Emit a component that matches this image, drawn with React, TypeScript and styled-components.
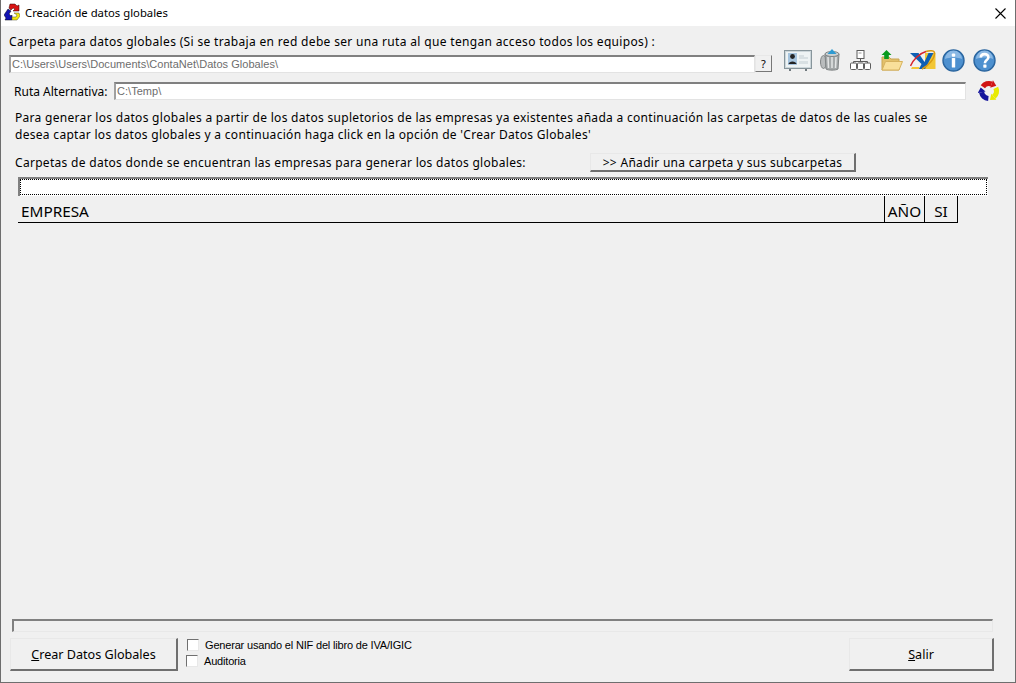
import styled, { createGlobalStyle } from 'styled-components';

const GlobalStyle = createGlobalStyle`
  html, body {
    margin: 0;
    padding: 0;
    background: #f0f0f0;
  }
`;

const CardIcon = () => (
  <svg width="28" height="21" viewBox="0 0 28 21">
    <rect x="0.5" y="0.5" width="27" height="18" fill="#eef3f4" stroke="#87959b" />
    <rect x="1.5" y="1.5" width="25" height="16" fill="none" stroke="#ccd6da" />
    <rect x="4" y="3" width="9" height="12" fill="#a6c4de" />
    <circle cx="8.5" cy="6.5" r="2.4" fill="#222" />
    <path d="M4.500 14 C5 10.500 12 10.500 12.500 14 Z" fill="#222" />
    <path d="M15 5h5v2h4v2h-9zM15 11h9v3h-9z" fill="#d8e0e3" />
    <path d="M6 19v2M22 19v2" stroke="#70797e" strokeWidth="2" />
  </svg>
);

const BinIcon = () => (
  <svg width="20" height="22" viewBox="0 0 20 22">
    <ellipse cx="3.500" cy="13" rx="3" ry="6.500" fill="#b9bcbd" stroke="#808485" />
    <path d="M5 5h14l-1 15c-2 1.500-10 1.500-12 0z" fill="#a4a8a9" stroke="#808485" />
    <path d="M8 8l.5 11M12 8v11M16 8l-.5 11" stroke="#e4e6e6" strokeWidth="1.500" />
    <ellipse cx="12" cy="5" rx="7" ry="2.500" fill="#cdd1d2" stroke="#808485" />
    <path d="M12 0l4.500 5h-9z" fill="#2f9bd2" />
  </svg>
);

const TreeIcon = () => (
  <svg width="21" height="20" viewBox="0 0 21 20" fill="#fff" stroke="#5c5c5c" strokeWidth="1">
    <rect x="7" y="0.500" width="7" height="8" />
    <path d="M8.500 3h3" stroke="#999" />
    <path d="M10.500 8.500v3M3.500 13v-1.500h14V13" fill="none" />
    <rect x="0.500" y="13" width="6" height="6.500" rx="1" />
    <rect x="7.500" y="13" width="6" height="6.500" rx="1" />
    <rect x="14.500" y="13" width="6" height="6.500" rx="1" />
  </svg>
);

const FolderIcon = () => (
  <svg width="22" height="21" viewBox="0 0 22 21">
    <path d="M1 7h7l2 2h8v11H1z" fill="#e2c06a" stroke="#c9a653" />
    <path d="M1 20l3.500-8.500H21.500L18 20z" fill="#f9e09a" stroke="#d6b25e" />
    <path d="M5.500 0l5 5H7.800v4H3.200V5H.500z" fill="#0a9a1e" />
  </svg>
);

const AeatIcon = () => (
  <svg width="26" height="20" viewBox="0 0 26 20">
    <rect x="15" y="3" width="10.500" height="16" fill="#f2c634" />
    <path d="M2 17h7l1 2H1z" fill="#f2c634" />
    <path d="M0 3h8.500l6 9 4-9h5L15 19H9l2.500-5z" fill="#0e5fb4" />
    <path d="M.500 16C3 10 9 3.500 16 1.500" fill="none" stroke="#d8242c" strokeWidth="1.500" />
    <path d="M12 19C18 16 25 9 24.500 2.500 24 0 19 .500 16 1.500" fill="none" stroke="#d99a12" strokeWidth="1.400" />
  </svg>
);

const InfoIcon = () => (
  <svg width="23" height="23" viewBox="0 0 23 23">
    <circle cx="11.500" cy="11.500" r="10.500" fill="#4d90cf" stroke="#2a659f" strokeWidth="1.400" />
    <path d="M3 10a8.500 8.500 0 0 1 17 0c-5-2-12-2-17 0z" fill="#8ab8e4" />
    <rect x="9.800" y="4.500" width="3.400" height="3.200" rx="1" fill="#fff" />
    <rect x="9.800" y="9" width="3.400" height="9.500" rx=".6" fill="#fff" />
  </svg>
);

const HelpIcon = () => (
  <svg width="23" height="23" viewBox="0 0 23 23">
    <circle cx="11.500" cy="11.500" r="10.500" fill="#4d90cf" stroke="#2a659f" strokeWidth="1.400" />
    <path d="M3 10a8.500 8.500 0 0 1 17 0c-5-2-12-2-17 0z" fill="#8ab8e4" />
    <path d="M7.800 8.500c0-4.500 7.600-4.500 7.600-.3 0 3-3.500 2.800-3.500 6" fill="none" stroke="#fff" strokeWidth="2.600" />
    <rect x="10.300" y="15.500" width="3.200" height="3.200" rx=".6" fill="#fff" />
  </svg>
);

const arrowColors = [
  { angle: 0, color: '#d01414' },
  { angle: 120, color: '#e8ea00' },
  { angle: 240, color: '#14149c' },
];

const RecycleIcon = () => (
  <svg width="22" height="22" viewBox="0 0 22 22">
    {arrowColors.map(arrow => (
      <g key={arrow.angle} transform={`rotate(${arrow.angle} 11 11)`}>
        <path d="M4.860 6.700A7.500 7.500 0 0 1 13.570 3.950" fill="none" stroke={arrow.color} strokeWidth="5.200" />
        <path d="M12.200 7.710L14.930.19 18.270 5.650z" fill={arrow.color} />
      </g>
    ))}
  </svg>
);

const TitleGlyph = () => (
  <svg width="16" height="18" viewBox="0 0 16 18">
    <path d="M6 1h5l2 2 2-1v6H9l2-2-2-1-2 2-2-2z" fill="#d81414" stroke="#300" strokeWidth=".5" />
    <path d="M4 6l3 2-2 3 2 2 1-1v5H1l1-2-2-3z" fill="#1414b4" stroke="#001" strokeWidth=".5" />
    <path d="M10 10h5l1 3-3 4H8v-3h4l1-2z" fill="#f2e812" stroke="#553" strokeWidth=".5" />
  </svg>
);

const App = (): JSX.Element => {
  return (
    <>
      <GlobalStyle />
      <Window>
        <TitleBar>
          <TitleIcon>
            <TitleGlyph />
          </TitleIcon>
          <TitleText>Creación de datos globales</TitleText>
          <CloseButton>
            <svg width="11" height="11" viewBox="0 0 11 11">
              <path d="M.5.5l10 10M10.500.5l-10 10" stroke="#000" strokeWidth="1.100" />
            </svg>
          </CloseButton>
        </TitleBar>

        <Body>
          <FolderLabel>
            Carpeta para datos globales (Si se trabaja en red debe ser una ruta al que tengan acceso todos los equipos) :
          </FolderLabel>

          <PathRow>
            <PathInput $width={746}>C:\Users\Users\Documents\ContaNet\Datos Globales\</PathInput>
            <HelpButton>?</HelpButton>
            <Toolbar>
              <ToolIcon $gap={0}><CardIcon /></ToolIcon>
              <ToolIcon $gap={8}><BinIcon /></ToolIcon>
              <ToolIcon $gap={10}><TreeIcon /></ToolIcon>
              <ToolIcon $gap={10}><FolderIcon /></ToolIcon>
              <ToolIcon $gap={7}><AeatIcon /></ToolIcon>
              <ToolIcon $gap={6}><InfoIcon /></ToolIcon>
              <ToolIcon $gap={8}><HelpIcon /></ToolIcon>
            </Toolbar>
          </PathRow>

          <AltRow>
            <AltLabel>Ruta Alternativa:</AltLabel>
            <PathInput $width={852}>C:\Temp\</PathInput>
            <RecycleSlot>
              <RecycleIcon />
            </RecycleSlot>
          </AltRow>

          <Paragraph>
            Para generar los datos globales a partir de los datos supletorios de las empresas ya existentes añada a continuación las carpetas de datos de las cuales se
            <br />
            desea captar los datos globales y a continuación haga click en la opción de 'Crear Datos Globales'
          </Paragraph>

          <AddRow>
            <AddLabel>Carpetas de datos donde se encuentran las empresas para generar los datos globales:</AddLabel>
            <AddButton>&gt;&gt; Añadir una carpeta y sus subcarpetas</AddButton>
          </AddRow>

          <FolderList>
            <FocusRow />
          </FolderList>

          <GridHeader>
            <CompanyCell>EMPRESA</CompanyCell>
            <YearCell>AÑO</YearCell>
            <YesCell>SI</YesCell>
          </GridHeader>

          <Spacer />

          <ProgressBar />

          <Footer>
            <ActionButton $width={168}>
              <u>C</u>rear Datos Globales
            </ActionButton>
            <Options>
              <OptionRow $indent={1}>
                <CheckBox />
                <OptionText>Generar usando el NIF del libro de IVA/IGIC</OptionText>
              </OptionRow>
              <OptionRow $indent={0}>
                <CheckBox />
                <OptionText>Auditoria</OptionText>
              </OptionRow>
            </Options>
            <ActionButton $width={145}>
              <u>S</u>alir
            </ActionButton>
          </Footer>
        </Body>
      </Window>
    </>
  );
};

export default App;

const uiFont = `Tahoma, "Noto Sans", "Open Sans", sans-serif`;

const Window = styled.div`
  box-sizing: border-box;
  width: 1016px;
  height: 683px;
  display: flex;
  flex-direction: column;
  background: #f0f0f0;
  border: 1px solid #6e6e6e;
  border-top: 0;
  font-family: ${uiFont};
  font-size: 12px;
  color: #000;
  overflow: hidden;
`;

const TitleBar = styled.div`
  flex: none;
  height: 26px;
  display: flex;
  align-items: center;
  background: #fff;
`;

const TitleIcon = styled.div`
  width: 21px;
  padding: 0 0 2px 3px;
  display: flex;
  align-items: center;
`;

const TitleText = styled.div`
  flex: 1;
  padding-bottom: 1px;
  font-size: 11.3px;
`;

const CloseButton = styled.div`
  width: 30px;
  display: flex;
  justify-content: center;
`;

const Body = styled.div`
  flex: 1;
  display: flex;
  flex-direction: column;
  min-height: 0;
`;

const FolderLabel = styled.div`
  height: 29px;
  padding-left: 8px;
  line-height: 31px;
  letter-spacing: 0.33px;
  white-space: nowrap;
`;

const PathRow = styled.div`
  height: 18px;
  display: flex;
  align-items: flex-start;
  padding-left: 8px;
`;

const PathInput = styled.div<{ $width: number }>`
  box-sizing: border-box;
  width: ${props => props.$width}px;
  height: 18px;
  flex: none;
  padding-left: 1px;
  background: #fff;
  border: 1px solid #e3e3e3;
  border-top: 2px solid #808080;
  border-left: 2px solid #a0a0a0;
  color: #6d6d6d;
  font-family: "Liberation Sans", sans-serif;
  font-size: 11px;
  letter-spacing: 0.04px;
  line-height: 14px;
  white-space: nowrap;
`;

const HelpButton = styled.div`
  box-sizing: border-box;
  width: 17px;
  height: 17px;
  flex: none;
  background: #f0f0f0;
  border: 1px solid #777;
  border-top-color: #e8e8e8;
  border-left-color: #e8e8e8;
  text-align: center;
  font-size: 11px;
  line-height: 15px;
`;

const Toolbar = styled.div`
  height: 24px;
  flex: none;
  margin-top: -7px;
  padding-left: 12px;
  display: flex;
  align-items: center;
`;

const ToolIcon = styled.div<{ $gap: number }>`
  display: flex;
  margin-left: ${props => props.$gap}px;
`;

const AltRow = styled.div`
  height: 18px;
  margin-top: 9px;
  display: flex;
  align-items: flex-start;
  padding-left: 13px;
`;

const AltLabel = styled.div`
  width: 100px;
  flex: none;
  line-height: 20px;
`;

const RecycleSlot = styled.div`
  margin-top: -2px;
  padding: 0 0 0 12px;
`;

const Paragraph = styled.div`
  margin-top: 9px;
  padding-left: 14px;
  line-height: 17px;
  letter-spacing: 0.3px;
  white-space: nowrap;
`;

const AddRow = styled.div`
  height: 19px;
  margin-top: 10px;
  display: flex;
  padding-left: 14px;
`;

const AddLabel = styled.div`
  width: 575px;
  flex: none;
  line-height: 20px;
  letter-spacing: 0.3px;
  white-space: nowrap;
`;

const AddButton = styled.div`
  box-sizing: border-box;
  width: 266px;
  height: 19px;
  background: #f0f0f0;
  border: 1px solid #6f6f6f;
  border-width: 1px 2px 2px 1px;
  border-top-color: #e8e8e8;
  border-left-color: #e8e8e8;
  text-align: center;
  line-height: 18px;
  letter-spacing: 0.3px;
`;

const FolderList = styled.div`
  box-sizing: border-box;
  width: 970px;
  height: 19px;
  margin: 5px 0 0 17px;
  padding: 0 1px 1px 0;
  background: #fff;
  border-top: 2px solid #808080;
  border-left: 2px solid #808080;
`;

const FocusRow = styled.div`
  box-sizing: border-box;
  height: 100%;
  border: 1px dotted #000;
`;

const GridHeader = styled.div`
  box-sizing: border-box;
  width: 940px;
  height: 27px;
  margin-left: 17px;
  display: flex;
  border-bottom: 1px solid #000;
  font-size: 15.3px;
  line-height: 30px;
`;

const CompanyCell = styled.div`
  flex: 1;
  padding-left: 3px;
`;

const YearCell = styled.div`
  box-sizing: border-box;
  width: 40px;
  text-align: center;
  border-left: 1px solid #000;
`;

const YesCell = styled.div`
  box-sizing: border-box;
  width: 34px;
  text-align: center;
  border-left: 1px solid #000;
  border-right: 1px solid #000;
`;

const Spacer = styled.div`
  flex: 1;
`;

const ProgressBar = styled.div`
  box-sizing: border-box;
  width: 981px;
  height: 13px;
  margin-left: 11px;
  border: 1px solid #e8e8e8;
  border-top: 2px solid #808080;
  border-left: 2px solid #808080;
`;

const Footer = styled.div`
  height: 33px;
  margin: 6px 0 11px;
  padding: 0 21px 0 9px;
  display: flex;
`;

const ActionButton = styled.div<{ $width: number }>`
  box-sizing: border-box;
  width: ${props => props.$width}px;
  height: 33px;
  flex: none;
  background: #f0f0f0;
  border: 1px solid #6f6f6f;
  border-width: 1px 2px 2px 1px;
  border-top-color: #e8e8e8;
  border-left-color: #e8e8e8;
  text-align: center;
  font-size: 12.6px;
  line-height: 32px;
`;

const Options = styled.div`
  flex: 1;
  margin-top: -1px;
  padding: 0 0 0 8px;
`;

const OptionRow = styled.div<{ $indent: number }>`
  height: 16px;
  display: flex;
  align-items: center;
  gap: 6px;
  padding-left: ${props => props.$indent}px;
`;

const CheckBox = styled.div`
  box-sizing: border-box;
  width: 12px;
  height: 12px;
  background: #fff;
  border: 1px solid #e8e8e8;
  border-top: 1px solid #707070;
  border-left: 1px solid #707070;
`;

const OptionText = styled.div`
  font-family: "Liberation Sans", sans-serif;
  font-size: 11px;
  letter-spacing: -0.18px;
  white-space: nowrap;
`;
